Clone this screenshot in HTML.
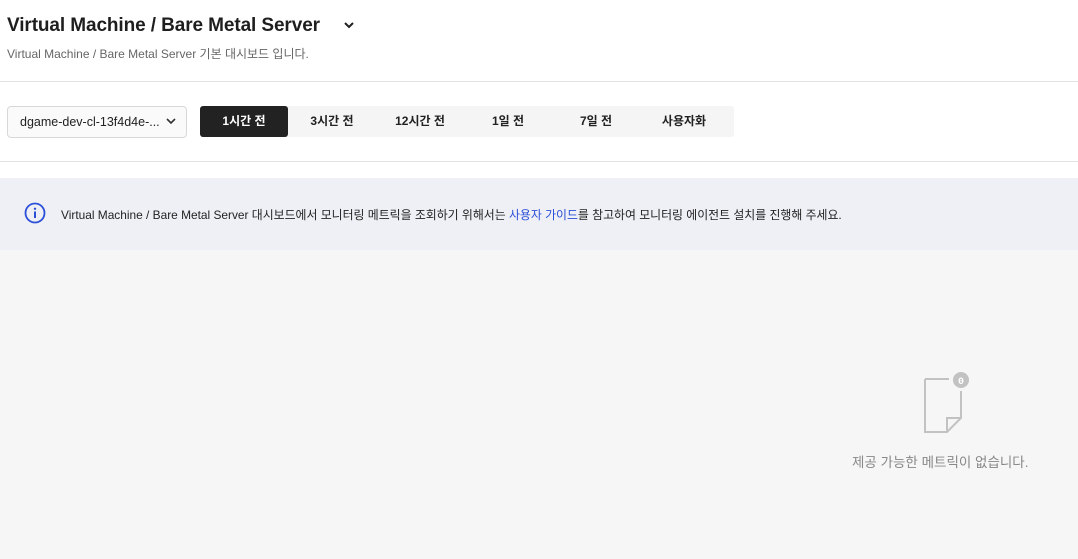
<!DOCTYPE html>
<html><head><meta charset="utf-8"><style>
*{margin:0;padding:0;box-sizing:border-box}
body{width:1078px;height:559px;overflow:hidden;background:#f6f6f6;font-family:"Liberation Sans","Noto Sans CJK KR",sans-serif;color:#222;position:relative}
.top{position:absolute;left:0;top:0;width:1078px;height:178px;background:#fff}
.title{position:absolute;left:7px;top:15px;font-size:19px;letter-spacing:-0.1px;font-weight:bold;color:#1e1e1e}
.sub{position:absolute;left:7px;top:45px;font-size:12px;color:#666}
.hr{position:absolute;left:0;width:1078px;height:1px;background:#e2e2e2}
.sel{position:absolute;left:7px;top:106px;width:180px;height:32px;border:1px solid #d8d8d8;border-radius:4px;background:#fafafa;font-size:12.5px;padding:8px 12px;color:#222}
.tabs{position:absolute;left:200px;top:106px;width:534px;height:31px;background:#f5f5f5;border-radius:3px;display:flex}
.tabs div{width:88px;text-align:center;font-size:12px;font-weight:bold;line-height:31px;color:#222}
.tabs .on{background:#222;color:#fff;border-radius:3px}
.info{position:absolute;left:0;top:178px;width:1078px;height:72px;background:#eef0f5}
.info span.t{position:absolute;left:61px;top:28px;font-size:11.9px;color:#222}
a{color:#2b4fd8;text-decoration:none}
.empty{position:absolute;left:852px;top:451px;font-size:13.5px;color:#888}
</style></head><body>
<div class="top"></div>
<div class="title">Virtual Machine / Bare Metal Server</div>
<svg style="position:absolute;left:343px;top:20px" width="12" height="10"><path d="M2 3l4 4 4-4" stroke="#222" stroke-width="2" fill="none"/></svg>
<div class="sub">Virtual Machine / Bare Metal Server 기본 대시보드 입니다.</div>
<div class="hr" style="top:81px"></div>
<div class="sel">dgame-dev-cl-13f4d4e-...</div>
<svg style="position:absolute;left:166px;top:117px" width="10" height="8"><path d="M1 2l4 4 4-4" stroke="#333" stroke-width="1.6" fill="none"/></svg>
<div class="tabs"><div class="on">1시간 전</div><div>3시간 전</div><div>12시간 전</div><div>1일 전</div><div>7일 전</div><div>사용자화</div></div>
<div class="hr" style="top:161px"></div>
<div class="info">
<svg style="position:absolute;left:24px;top:24px" width="22" height="22"><circle cx="11" cy="11" r="9.5" stroke="#2b4fd8" stroke-width="1.8" fill="none"/><circle cx="11" cy="6.8" r="1.2" fill="#2b4fd8"/><rect x="10" y="9.5" width="2" height="6.5" fill="#2b4fd8"/></svg>
<span class="t">Virtual Machine / Bare Metal Server 대시보드에서 모니터링 메트릭을 조회하기 위해서는 <a>사용자 가이드</a>를 참고하여 모니터링 에이전트 설치를 진행해 주세요.</span>
</div>
<svg style="position:absolute;left:915px;top:365px" width="60" height="70"><path d="M10 14v53h22l14-14V26M10 14h24" stroke="#c2c2c2" stroke-width="2" fill="none"/><path d="M32 67V53h14" stroke="#c2c2c2" stroke-width="2" fill="none"/><circle cx="46" cy="15" r="9" fill="#c2c2c2" stroke="#f6f6f6" stroke-width="2"/><text x="46" y="19" font-size="10" font-weight="bold" fill="#fff" text-anchor="middle" font-family="Liberation Mono,monospace">0</text></svg>
<div class="empty">제공 가능한 메트릭이 없습니다.</div>
</body></html>
